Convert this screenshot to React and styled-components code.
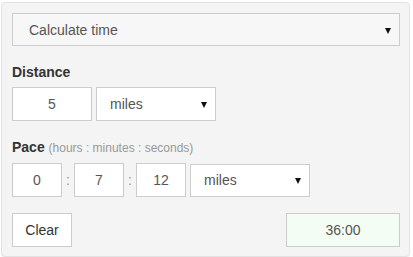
import React, { useState } from 'react'
import styled, { createGlobalStyle } from 'styled-components'

const GlobalStyle = createGlobalStyle`
    html, body {
        margin: 0;
        padding: 0;
        background: #ffffff;
    }
    body {
        font-family: "Liberation Sans", Arial, sans-serif;
        color: #555;
    }
`

const Panel = styled.div`
    box-sizing: border-box;
    width: 409px;
    margin: 2px 0 0 1px;
    padding: 10px 9px 9px 10px;
    background: #f4f4f4;
    border: 1px solid #e2e2e2;
    border-radius: 4px;
    box-shadow: 0 1px 1px rgba(0, 0, 0, 0.05);
`

const SelectWrap = styled.div`
    position: relative;
    width: ${p => p.width}px;
    flex: none;
    &::after {
        content: '';
        position: absolute;
        right: 9px;
        top: 50%;
        margin-top: -2px;
        border-left: 3.5px solid transparent;
        border-right: 3.5px solid transparent;
        border-top: 6px solid #111;
    }
`

const Select = styled.select`
    appearance: none;
    -webkit-appearance: none;
    box-sizing: border-box;
    width: 100%;
    height: ${p => p.h || 34}px;
    margin: 0;
    padding: 0 24px 0 ${p => p.pl || 13}px;
    border: 1px solid #cccccc;
    border-radius: 0;
    background: ${p => p.bg || '#ffffff'};
    color: #555;
    font-family: "Liberation Sans", Arial, sans-serif;
    font-size: 14px;
    outline: none;
`

const Label = styled.div`
    margin: 16px 0 5px;
    line-height: 20px;
    font-size: 14px;
    font-weight: bold;
    color: #333;
`

const Hint = styled.span`
    font-weight: normal;
    font-size: 12px;
    color: #999;
`

const Row = styled.div`
    display: flex;
    align-items: center;
`

const NumInput = styled.input`
    box-sizing: border-box;
    width: ${p => p.width}px;
    height: 34px;
    margin: 0 ${p => p.mr || 0}px 0 0;
    padding: 0;
    border: 1px solid #cccccc;
    border-radius: 0;
    background: #fff;
    color: #555;
    text-align: center;
    font-family: "Liberation Sans", Arial, sans-serif;
    font-size: 14px;
    outline: none;
    flex: none;
`

const Colon = styled.span`
    width: 12px;
    text-align: center;
    font-size: 14px;
    color: #999;
`

const Footer = styled.div`
    display: flex;
    justify-content: space-between;
    margin-top: 16px;
`

const Button = styled.button`
    box-sizing: border-box;
    width: 60px;
    height: 34px;
    border: 1px solid #cccccc;
    border-radius: 0;
    background: #fff;
    color: #333;
    font-family: "Liberation Sans", Arial, sans-serif;
    font-size: 14px;
    padding: 0;
`

const Result = styled.div`
    box-sizing: border-box;
    width: 114px;
    height: 34px;
    display: flex;
    align-items: center;
    justify-content: center;
    border: 1px solid #cccccc;
    background: #f4fdf4;
    color: #555;
    font-size: 14px;
`

export default function App() {
    const [distance, setDistance] = useState('5')
    const [pace, setPace] = useState({ h: '0', m: '7', s: '12' })

    return (
        <>
            <GlobalStyle />
            <Panel>
                <SelectWrap width={388}>
                    <Select h={33} pl={16} bg="#f7f7f7" defaultValue="time">
                        <option value="time">Calculate time</option>
                        <option value="distance">Calculate distance</option>
                        <option value="pace">Calculate pace</option>
                    </Select>
                </SelectWrap>

                <Label>Distance</Label>
                <Row>
                    <NumInput width={80} mr={4} value={distance} onChange={e => setDistance(e.target.value)} />
                    <SelectWrap width={120}>
                        <Select defaultValue="miles">
                            <option value="miles">miles</option>
                            <option value="km">kilometers</option>
                        </Select>
                    </SelectWrap>
                </Row>

                <Label>
                    Pace <Hint>(hours : minutes : seconds)</Hint>
                </Label>
                <Row>
                    <NumInput width={50} value={pace.h} onChange={e => setPace({ ...pace, h: e.target.value })} />
                    <Colon>:</Colon>
                    <NumInput width={50} value={pace.m} onChange={e => setPace({ ...pace, m: e.target.value })} />
                    <Colon>:</Colon>
                    <NumInput width={50} mr={4} value={pace.s} onChange={e => setPace({ ...pace, s: e.target.value })} />
                    <SelectWrap width={120}>
                        <Select h={33} defaultValue="miles">
                            <option value="miles">miles</option>
                            <option value="km">kilometers</option>
                        </Select>
                    </SelectWrap>
                </Row>

                <Footer>
                    <Button onClick={() => { setDistance(''); setPace({ h: '', m: '', s: '' }) }}>Clear</Button>
                    <Result>36:00</Result>
                </Footer>
            </Panel>
        </>
    )
}
